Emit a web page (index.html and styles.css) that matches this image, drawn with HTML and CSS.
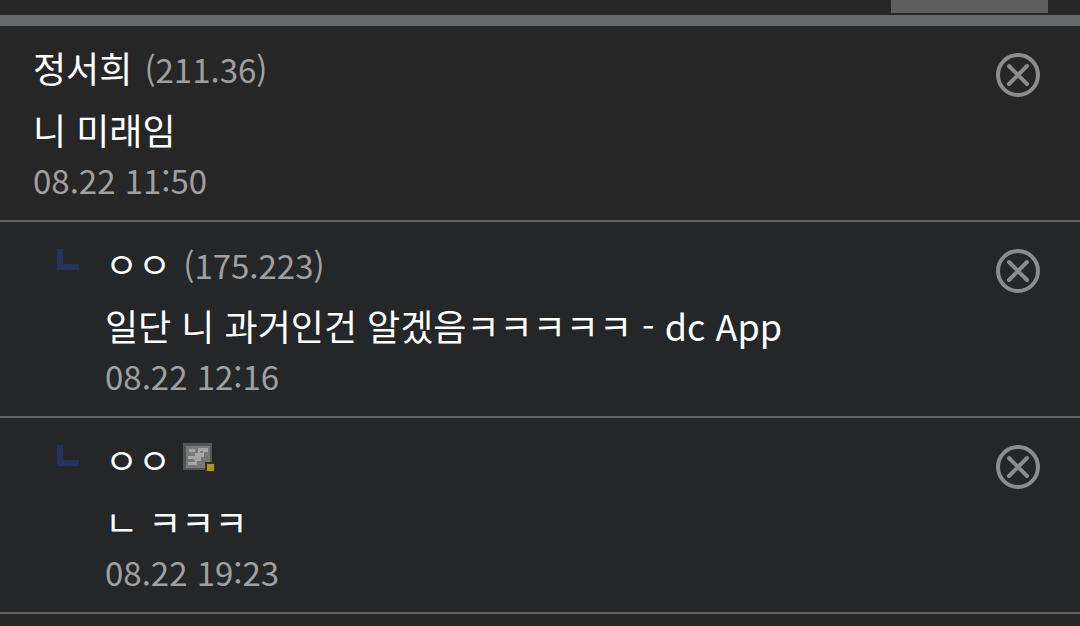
FILE: index.html
```html
<!DOCTYPE html>
<html lang="ko">
<head>
<meta charset="utf-8">
<title>댓글</title>
<link rel="stylesheet" href="styles.css">
</head>
<body>
<header class="topbar"><span class="tab"></span></header>
<main class="comments">
<article class="comment">
<div class="body">
<div class="author"><span class="name">정서희</span><span class="ip">(211.36)</span></div>
<p class="text">니 미래임</p>
<time class="date">08.22 11:50</time>
</div>
<button class="delete" aria-label="삭제"><svg viewBox="0 0 44 44"><circle cx="22" cy="22" r="20"/><path d="M13 13L31 31M31 13L13 31"/></svg></button>
</article>
<article class="comment reply">
<svg class="branch" viewBox="0 0 22 22"><path d="M0 0H6V15H22V21H0Z"/></svg>
<div class="body">
<div class="author"><span class="name">ㅇㅇ</span><span class="ip">(175.223)</span></div>
<p class="text">일단 니 과거인건 알겠음ㅋㅋㅋㅋㅋ - dc App</p>
<time class="date">08.22 12:16</time>
</div>
<button class="delete" aria-label="삭제"><svg viewBox="0 0 44 44"><circle cx="22" cy="22" r="20"/><path d="M13 13L31 31M31 13L13 31"/></svg></button>
</article>
<article class="comment reply">
<svg class="branch" viewBox="0 0 22 22"><path d="M0 0H6V15H22V21H0Z"/></svg>
<div class="body">
<div class="author"><span class="name">ㅇㅇ</span><svg class="badge" viewBox="0 0 32 32"><path fill="#535454" d="M0 0H29V27H0Z"/><path fill="#777878" d="M3 3H27V25H3Z"/><path fill="#a6a6a6" d="M6 6H12V9H6ZM15 5H25V9H21V14H18V18H14V22H5V19H11V16H5V13H12V10H15Z"/><path fill="#777878" d="M17 8H20V10H17ZM9 17H12V19H9Z"/><path fill="#343321" d="M22 19H32V29H22Z"/><path fill="#a8942b" d="M24 21H31V28H24Z"/></svg></div>
<p class="text">ㄴ ㅋㅋㅋ</p>
<time class="date">08.22 19:23</time>
</div>
<button class="delete" aria-label="삭제"><svg viewBox="0 0 44 44"><circle cx="22" cy="22" r="20"/><path d="M13 13L31 31M31 13L13 31"/></svg></button>
</article>
</main>
</body>
</html>
```
FILE: styles.css
```css
* { box-sizing: border-box; }
body {
  margin: 0;
  min-height: 100vh;
  background: #262626;
  color: #fff;
  font-family: "Noto Sans CJK KR", sans-serif;
  font-size: 36px;
}
.topbar {
  display: flex;
  justify-content: flex-end;
  height: 26px;
  padding-right: 32px;
  border-bottom: 11px solid #66676b;
}
.tab { width: 157px; height: 13px; background: #5e5e5e; }
.comment {
  display: flex;
  align-items: flex-start;
  padding: 14px 40px 24px 33px;
  border-bottom: 2px solid #626366;
}
.reply { padding-left: 57px; background: #242628; }
.branch { width: 22px; height: 22px; margin: 13px 26px 0 0; fill: #27315f; flex: none; }
.body { flex: 1; min-width: 0; }
.author { display: flex; align-items: center; gap: 12px; height: 54px; }
.ip, .date { color: #a0a0a0; font-size: 33px; }
.ip { padding-top: 4px; }
.text { margin: 0; line-height: 70px; }
.date { display: block; line-height: 32px; }
.badge { width: 32px; height: 32px; }
.delete { width: 44px; height: 44px; margin: 13px 0 0; padding: 0; border: 0; background: none; }
.delete svg { display: block; width: 44px; height: 44px; fill: none; stroke: #8c8c8c; stroke-width: 4; stroke-linecap: round; }
```
